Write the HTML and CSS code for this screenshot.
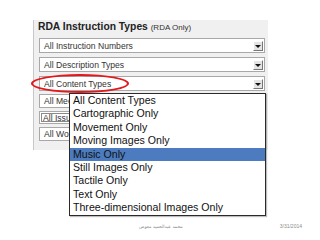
FILE: index.html
```html
<!DOCTYPE html>
<html lang="en">
<head>
    <meta charset="UTF-8">
    <title>RDA Instruction Types</title>
    <link rel="stylesheet" href="styles.css">
</head>
<body>
    <div class="slide">
        <!-- Cropped screenshot of the search form -->
        <div class="panel">
            <div class="panel-title">RDA Instruction Types <span class="note">(RDA Only)</span></div>

            <div class="field f1"><span>All Instruction Numbers</span><i class="arrow"></i></div>
            <div class="field f2"><span>All Description Types</span><i class="arrow"></i></div>
            <div class="field f3"><span>All Content Types</span><i class="arrow"></i></div>
            <!-- these three are hidden behind the open list -->
            <div class="field f4 cut"><span>All Mec</span></div>
            <div class="field f5 cut"><span>All Issu</span></div>
            <div class="field f6 cut"><span>All Wo</span></div>

            <!-- Red highlight round the content types box -->
            <div class="ring"></div>

            <!-- Open options list -->
            <ul class="options">
                <li>All Content Types</li>
                <li>Cartographic Only</li>
                <li>Movement Only</li>
                <li>Moving Images Only</li>
                <li class="selected">Music Only</li>
                <li>Still Images Only</li>
                <li>Tactile Only</li>
                <li>Text Only</li>
                <li>Three-dimensional Images Only</li>
            </ul>
        </div>

        <div class="footer">
            <span class="author" dir="rtl">محمد عبدالحميد معوض</span>
            <span class="date">3/31/2014</span>
        </div>
    </div>
</body>
</html>
```

FILE: styles.css
```css
* {
    margin: 0;
    padding: 0;
    box-sizing: border-box;
}

body {
    background: #fff;
    font-family: 'Liberation Sans', Arial, sans-serif;
}

.slide {
    width: 320px;
    height: 240px;
    display: flex;
    flex-direction: column;
    overflow: hidden;
}

/* Screenshot panel */
.panel {
    position: relative;
    margin: 20px 0 0 33px;
    width: 235px;
    height: 130px;
    padding: 1px 3px 0 5px;
    background: #f0f0f0;
    border-left: 1px solid #c8c8c8;
}

.panel-title {
    height: 12px;
    line-height: 12px;
    margin-left: -1px;
    font-size: 10.3px;
    font-weight: bold;
    color: #222;
    white-space: nowrap;
}

.panel-title .note {
    font-size: 8px;
    font-weight: normal;
    color: #333;
}

/* Select boxes */
.field {
    display: flex;
    align-items: center;
    justify-content: space-between;
    height: 15px;
    margin-top: 4px;
    padding: 0 1px 0 4px;
    background: #fff;
    border: 1px solid #a8a8a8;
    font-size: 8.6px;
    color: #333;
    white-space: nowrap;
}

.field.f1 { margin-top: 5px; }
.field.f4 { margin-top: 3px; height: 14px; }
.field.f5 {
    margin-top: 3px;
    height: 13px;
    padding-left: 3px;
    box-shadow: inset 0 0 0 1px #fff, inset 0 0 0 2px #8a8a8a;
}
.field.f6 { margin-top: 3px; height: 14px; }

.field.cut {
    width: 32px;
    overflow: hidden;
    border-right: 0;
    justify-content: flex-start;
}

.arrow {
    position: relative;
    width: 10px;
    height: 10px;
    background: #e4e4e4;
    border: 1px solid;
    border-color: #fff #777 #777 #fff;
}

.arrow::after {
    content: '';
    position: absolute;
    left: 1px;
    top: 3px;
    border-left: 3px solid transparent;
    border-right: 3px solid transparent;
    border-top: 3px solid #111;
}

.ring {
    position: absolute;
    left: -3px;
    top: 54px;
    width: 98px;
    height: 19px;
    border: 2px solid #e3181c;
    border-radius: 50%;
}

/* Open list */
.options {
    position: absolute;
    left: 35px;
    top: 73px;
    width: 197px;
    list-style: none;
    background: #fff;
    border: 1px solid #2a2a2a;
    box-shadow: 1px 1px 1px rgba(0, 0, 0, 0.25);
    font-size: 10.6px;
    color: #111;
}

.options li {
    height: 13.4px;
    line-height: 13.4px;
    padding-left: 3px;
    white-space: nowrap;
}

.options li.selected {
    background: #4c7cbf;
}

/* Slide footer */
.footer {
    margin-top: auto;
    display: flex;
    align-items: center;
    height: 20px;
    padding: 0 18px 8px 139px;
    color: #8c8c8c;
}

.author {
    font-size: 4.5px;
    font-family: 'DejaVu Sans', sans-serif;
}

.date {
    margin-left: auto;
    font-size: 5px;
}
```
